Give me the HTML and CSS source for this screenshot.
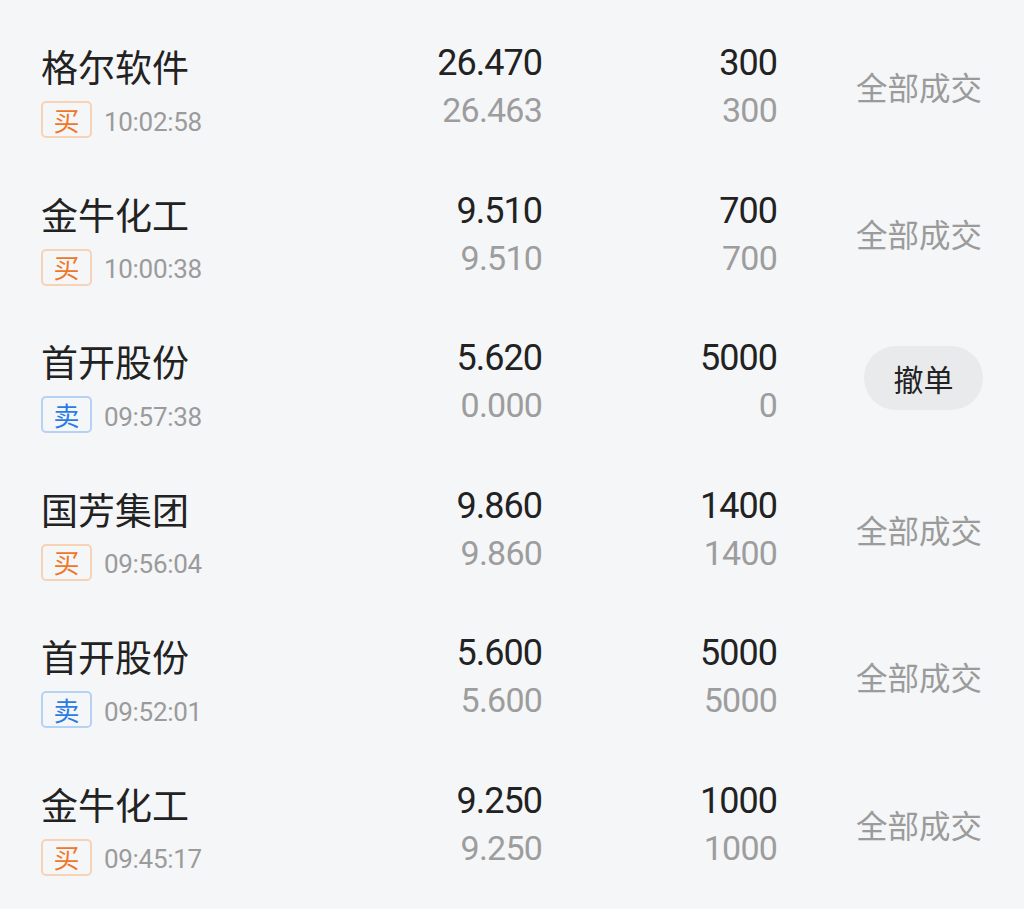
FILE: index.html
```html
<!DOCTYPE html>
<html lang="zh-CN">
<head>
<meta charset="utf-8">
<title>委托</title>
<link rel="stylesheet" href="styles.css">
</head>
<body>
<div class="list">
  <div class="row">
    <div class="left">
      <div class="name">格尔软件</div>
      <div class="meta"><span class="badge buy">买</span><span class="time">10:02:58</span></div>
    </div>
    <div class="num"><div class="v1">26.470</div><div class="v2">26.463</div></div>
    <div class="num"><div class="v1">300</div><div class="v2">300</div></div>
    <div class="status">全部成交</div>
  </div>
  <div class="row">
    <div class="left">
      <div class="name">金牛化工</div>
      <div class="meta"><span class="badge buy">买</span><span class="time">10:00:38</span></div>
    </div>
    <div class="num"><div class="v1">9.510</div><div class="v2">9.510</div></div>
    <div class="num"><div class="v1">700</div><div class="v2">700</div></div>
    <div class="status">全部成交</div>
  </div>
  <div class="row">
    <div class="left">
      <div class="name">首开股份</div>
      <div class="meta"><span class="badge sell">卖</span><span class="time">09:57:38</span></div>
    </div>
    <div class="num"><div class="v1">5.620</div><div class="v2">0.000</div></div>
    <div class="num"><div class="v1">5000</div><div class="v2">0</div></div>
    <div class="status"><button class="cancel">撤单</button></div>
  </div>
  <div class="row">
    <div class="left">
      <div class="name">国芳集团</div>
      <div class="meta"><span class="badge buy">买</span><span class="time">09:56:04</span></div>
    </div>
    <div class="num"><div class="v1">9.860</div><div class="v2">9.860</div></div>
    <div class="num"><div class="v1">1400</div><div class="v2">1400</div></div>
    <div class="status">全部成交</div>
  </div>
  <div class="row">
    <div class="left">
      <div class="name">首开股份</div>
      <div class="meta"><span class="badge sell">卖</span><span class="time">09:52:01</span></div>
    </div>
    <div class="num"><div class="v1">5.600</div><div class="v2">5.600</div></div>
    <div class="num"><div class="v1">5000</div><div class="v2">5000</div></div>
    <div class="status">全部成交</div>
  </div>
  <div class="row">
    <div class="left">
      <div class="name">金牛化工</div>
      <div class="meta"><span class="badge buy">买</span><span class="time">09:45:17</span></div>
    </div>
    <div class="num"><div class="v1">9.250</div><div class="v2">9.250</div></div>
    <div class="num"><div class="v1">1000</div><div class="v2">1000</div></div>
    <div class="status">全部成交</div>
  </div>
</div>
</body>
</html>
```

FILE: styles.css
```css
html, body {
  margin: 0;
  padding: 0;
  background: #f5f6f8;
}
body {
  font-family: Roboto, "Noto Sans CJK SC", sans-serif;
  color: #222222;
}
.list {
  padding-top: 14px;
}
.row {
  height: 147.6px;
  box-sizing: border-box;
  padding: 0 42px 0 41px;
  display: grid;
  grid-template-columns: 1fr 200px 235px 206px;
  align-items: start;
}
.left {
  padding-top: 30px;
}
.name {
  font-family: "Noto Sans CJK SC", sans-serif;
  font-size: 37px;
  line-height: 44px;
  color: #222222;
}
.meta {
  margin-top: 13px;
  display: flex;
  align-items: center;
}
.badge {
  box-sizing: border-box;
  width: 51px;
  height: 37px;
  border: 2px solid;
  border-radius: 5px;
  display: flex;
  align-items: center;
  justify-content: center;
  font-family: "Noto Sans CJK SC", sans-serif;
  font-size: 26px;
  line-height: 1;
}
.badge.buy {
  color: #f07628;
  border-color: #f7d2b6;
}
.badge.sell {
  color: #2a7be4;
  border-color: #b6d1f3;
}
.time {
  margin-left: 12px;
  font-size: 26px;
  letter-spacing: -0.3px;
  color: #9b9b9b;
  line-height: 1;
  padding-top: 4px;
}
.num {
  text-align: right;
  padding-top: 25px;
}
.v1 {
  font-size: 36px;
  line-height: 48px;
  letter-spacing: -1px;
  margin-right: -1px;
  color: #222222;
}
.v2 {
  font-size: 34px;
  line-height: 47px;
  letter-spacing: -0.8px;
  margin-right: -1px;
  color: #9d9d9d;
}
.status {
  align-self: center;
  text-align: right;
  font-family: "Noto Sans CJK SC", sans-serif;
  font-size: 31.5px;
  color: #9b9b9b;
  margin-bottom: 4px;
}
.cancel {
  width: 119px;
  height: 64px;
  border: none;
  border-radius: 32px;
  background: #e9eaec;
  color: #222222;
  font-family: "Noto Sans CJK SC", sans-serif;
  font-size: 30px;
  padding: 0;
  margin-bottom: 6px;
  margin-right: -1px;
}
```
